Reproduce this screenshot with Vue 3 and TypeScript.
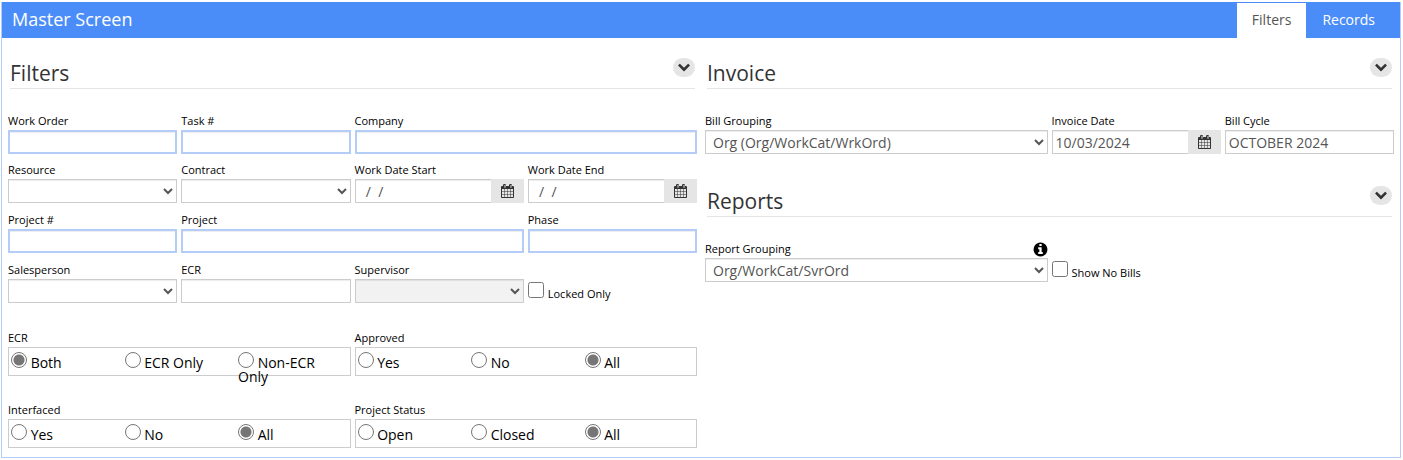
<script setup lang="ts">
import { ref } from 'vue'

interface Field {
  id: string
  label: string
  kind: 'lookup' | 'text' | 'select' | 'date'
  value?: string
  wide?: boolean
  disabled?: boolean
}

interface RadioGroup {
  id: string
  label: string
  options: string[]
  selected: string
}

const tabs = ['Filters', 'Records']
const activeTab = ref('Filters')
const emptyDate = '  /  /    '

const leadFields = ref<Field[]>([
  { id: 'work-order', label: 'Work Order', kind: 'lookup', value: '' },
  { id: 'task', label: 'Task #', kind: 'lookup', value: '' },
  { id: 'company', label: 'Company', kind: 'lookup', value: '', wide: true },
])

const detailFields = ref<Field[]>([
  { id: 'resource', label: 'Resource', kind: 'select', value: '' },
  { id: 'contract', label: 'Contract', kind: 'select', value: '' },
  { id: 'date-start', label: 'Work Date Start', kind: 'date', value: emptyDate },
  { id: 'date-end', label: 'Work Date End', kind: 'date', value: emptyDate },
  { id: 'project-no', label: 'Project #', kind: 'lookup', value: '' },
  { id: 'project', label: 'Project', kind: 'lookup', value: '', wide: true },
  { id: 'phase', label: 'Phase', kind: 'lookup', value: '' },
  { id: 'salesperson', label: 'Salesperson', kind: 'select', value: '' },
  { id: 'ecr', label: 'ECR', kind: 'text', value: '' },
  { id: 'supervisor', label: 'Supervisor', kind: 'select', value: '', disabled: true },
])

const invoiceFields = ref<Field[]>([
  { id: 'bill-grouping', label: 'Bill Grouping', kind: 'select', value: 'Org (Org/WorkCat/WrkOrd)', wide: true },
  { id: 'invoice-date', label: 'Invoice Date', kind: 'date', value: '10/03/2024' },
  { id: 'bill-cycle', label: 'Bill Cycle', kind: 'text', value: 'OCTOBER 2024' },
])

const groups = ref<RadioGroup[]>([
  { id: 'ecr-type', label: 'ECR', options: ['Both', 'ECR Only', 'Non-ECR Only'], selected: 'Both' },
  { id: 'approved', label: 'Approved', options: ['Yes', 'No', 'All'], selected: 'All' },
  { id: 'interfaced', label: 'Interfaced', options: ['Yes', 'No', 'All'], selected: 'All' },
  { id: 'status', label: 'Project Status', options: ['Open', 'Closed', 'All'], selected: 'All' },
])

const sets = { lead: leadFields, detail: detailFields, invoice: invoiceFields }
const lockedOnly = ref(false)
const showNoBills = ref(false)
const reportGrouping = ref('Org/WorkCat/SvrOrd')

const chevron =
  'M1683 808l-742 741q-19 19-45 19t-45-19l-742-741q-19-19-19-45.500t19-45.500l166-165q19-19 45-19t45 19l531 531 531-531q19-19 45-19t45 19l166 165q19 19 19 45.500t-19 45.500z'
const calendar =
  'M192 1664h288v-288h-288v288zM544 1664h320v-288h-320v288zM192 1312h288v-320h-288v320zM544 1312h320v-320h-320v320zM192 928h288v-288h-288v288zM928 1664h320v-288h-320v288zM544 928h320v-288h-320v288zM1312 1664h288v-288h-288v288zM928 1312h320v-320h-320v320zM640 448v-288q0-13-9.500-22.500t-22.500-9.500h-64q-13 0-22.500 9.500t-9.500 22.500v288q0 13 9.500 22.500t22.500 9.500h64q13 0 22.500-9.500t9.500-22.500zM1312 1312h288v-320h-288v320zM928 928h320v-288h-320v288zM1312 928h288v-288h-288v288zM1408 448v-288q0-13-9.500-22.500t-22.500-9.500h-64q-13 0-22.500 9.500t-9.500 22.500v288q0 13 9.500 22.500t22.500 9.500h64q13 0 22.500-9.500t9.500-22.500zM1728 384v1280q0 52-38 90t-90 38h-1408q-52 0-90-38t-38-90v-1280q0-52 38-90t90-38h128v-96q0-66 47-113t113-47h64q66 0 113 47t47 113v96h384v-96q0-66 47-113t113-47h64q66 0 113 47t47 113v96h128q52 0 90 38t38 90z'
const info =
  'M1152 1376v-160q0-14-9-23t-23-9h-96v-512q0-14-9-23t-23-9h-320q-14 0-23 9t-9 23v160q0 14 9 23t23 9h96v320h-96q-14 0-23 9t-9 23v160q0 14 9 23t23 9h448q14 0 23-9t9-23zm-128-896v-160q0-14-9-23t-23-9h-192q-14 0-23 9t-9 23v160q0 14 9 23t23 9h192q14 0 23-9t9-23zm640 416q0 209-103 385.500t-279.500 279.500-385.500 103-385.500-103-279.500-279.500-103-385.500 103-385.500 279.500-279.500 385.500-103 385.500 103 279.500 279.500 103 385.500z'

const columns = [
  [{ title: 'Filters', blocks: ['lead', 'detail', 'radios'] }],
  [
    { title: 'Invoice', blocks: ['invoice'] },
    { title: 'Reports', blocks: ['report'] },
  ],
]

function fieldsOf(block: string): Field[] {
  return block in sets ? sets[block as keyof typeof sets].value : []
}
</script>

<template>
  <main class="panel">
    <header class="bar">
      <h1 class="title">Master Screen</h1>
      <nav class="tabs">
        <button
          v-for="tab in tabs"
          :key="tab"
          type="button"
          class="tab"
          :class="{ active: tab === activeTab }"
          @click="activeTab = tab"
        >{{ tab }}</button>
      </nav>
    </header>

    <div class="columns">
      <div v-for="(column, c) in columns" :key="c">
        <section v-for="section in column" :key="section.title" class="section">
          <div class="section-head">
            <h2>{{ section.title }}</h2>
            <button type="button" class="toggle" :aria-label="'Toggle ' + section.title">
              <svg width="14" height="13" viewBox="0 138 1792 1792" aria-hidden="true"><path :d="chevron" /></svg>
            </button>
          </div>

          <div v-for="block in section.blocks" :key="block" class="grid" :class="block">
            <div v-for="field in fieldsOf(block)" :key="field.id" class="field" :class="{ wide: field.wide }">
              <label :for="field.id" class="caption">{{ field.label }}</label>
              <select v-if="field.kind === 'select'" :id="field.id" v-model="field.value" class="control" :disabled="field.disabled">
                <option :value="field.value">{{ field.value }}</option>
              </select>
              <div v-else-if="field.kind === 'date'" class="date">
                <input :id="field.id" v-model="field.value" type="text" class="control" />
                <button type="button" class="pick" :aria-label="'Pick ' + field.label">
                  <svg width="13" height="14" viewBox="64 0 1664 1792" aria-hidden="true"><path :d="calendar" /></svg>
                </button>
              </div>
              <input v-else :id="field.id" v-model="field.value" type="text" class="control" :class="{ lookup: field.kind === 'lookup' }" />
            </div>

            <label v-if="block === 'detail'" class="check">
              <input v-model="lockedOnly" type="checkbox" />
              <span>Locked Only</span>
            </label>

            <template v-if="block === 'radios'">
              <div v-for="group in groups" :key="group.id" class="wide" role="radiogroup" :aria-labelledby="group.id">
                <span :id="group.id" class="caption">{{ group.label }}</span>
                <div class="options">
                  <label v-for="option in group.options" :key="option" class="option">
                    <input v-model="group.selected" type="radio" :name="group.id" :value="option" />
                    {{ option }}
                  </label>
                </div>
              </div>
            </template>

            <template v-if="block === 'report'">
              <div class="field wide">
                <div class="caption-row">
                  <label for="report-grouping" class="caption">Report Grouping</label>
                  <svg class="info" width="15" height="15" viewBox="64 64 1664 1664" aria-hidden="true"><path :d="info" /></svg>
                </div>
                <select id="report-grouping" v-model="reportGrouping" class="control">
                  <option>Org/WorkCat/SvrOrd</option>
                </select>
              </div>
              <label class="check">
                <input v-model="showNoBills" type="checkbox" />
                <span>Show No Bills</span>
              </label>
            </template>
          </div>
        </section>
      </div>
    </div>
  </main>
</template>

<style>
body {
  margin: 0;
  background: #fff;
}
</style>

<style scoped>
.panel,
.panel * {
  box-sizing: border-box;
}
.panel {
  margin: 2px 2px 2px 1px;
  border: 1px solid #b3cdf8;
  border-top: 0;
  color: #000;
  font-family: 'Open Sans', 'Noto Sans', sans-serif;
  font-size: 14px;
}
.bar {
  display: flex;
  justify-content: space-between;
  height: 36px;
  padding: 1px 10px 0;
  background: #4b8df8;
  color: #fff;
}
.title {
  margin: 0;
  font-size: 18px;
  font-weight: 400;
  line-height: 32px;
}
.tabs {
  display: flex;
  gap: 1px;
}
.tab {
  padding: 0 15px 2px;
  border: 0;
  background: none;
  color: #fff;
  font: inherit;
  line-height: 32px;
}
.tab.active {
  background: #fff;
  color: #555;
}
.columns {
  display: grid;
  grid-template-columns: 1fr 1fr;
  gap: 8px;
  padding: 0 6px 9px;
}
.section-head {
  display: flex;
  justify-content: space-between;
  align-items: flex-start;
  height: 51px;
  margin: 0 2px 25px;
  padding-top: 20px;
  border-bottom: 1px solid #e5e5e5;
}
.section + .section .section-head {
  margin-top: 12px;
}
h2 {
  margin: 0;
  color: #333;
  font-size: 21px;
  font-weight: 400;
  line-height: 30px;
}
.toggle {
  display: flex;
  align-items: center;
  justify-content: center;
  width: 22px;
  height: 19px;
  padding: 0;
  border: 0;
  border-radius: 10px;
  background: #e5e5e5;
}
.toggle svg {
  fill: #333;
}
.grid {
  display: grid;
  grid-template-columns: repeat(4, minmax(0, 1fr));
  gap: 10px 4px;
}
.lead {
  margin-bottom: 9px;
}
.detail {
  margin-bottom: 28px;
}
.radios {
  row-gap: 27px;
}
.wide {
  grid-column: span 2;
}
.caption {
  display: block;
  padding-bottom: 2px;
  font-size: 11px;
  line-height: 14px;
}
.caption-row {
  display: flex;
  justify-content: space-between;
}
.info {
  display: block;
}
.control {
  display: block;
  width: 100%;
  height: 24px;
  margin: 0;
  padding: 0 3px;
  border: 1px solid #ccc;
  border-radius: 0;
  background-color: #fff;
  box-shadow: inset 0 1px 1px rgba(0, 0, 0, 0.075);
  color: #555;
  font: inherit;
}
.control.lookup {
  border: 2px solid #b3cdf8;
}
.control:disabled {
  background-color: #f2f2f2;
  opacity: 1;
}
.date {
  display: flex;
}
.date .control {
  flex: 1;
  min-width: 0;
  border-right: 0;
}
.pick {
  display: flex;
  align-items: center;
  justify-content: center;
  width: 33px;
  height: 24px;
  padding: 0;
  border: 0;
  background: #e5e5e5;
}
.pick svg {
  fill: #333;
}
.check {
  display: flex;
  align-items: flex-end;
  align-self: end;
  gap: 4px;
  height: 24px;
  padding-bottom: 2px;
  font-size: 11px;
  line-height: 14px;
}
.check input {
  width: 16px;
  height: 16px;
  margin: 0 0 3px;
}
.options {
  display: grid;
  grid-template-columns: repeat(3, minmax(0, 1fr));
  height: 29px;
  padding-top: 4px;
  border: 1px solid #ccc;
}
.option {
  padding: 0 10px 0 2px;
  line-height: 14px;
}
.option input {
  appearance: none;
  width: 16px;
  height: 16px;
  margin: 0;
  border: 1px solid #767676;
  border-radius: 50%;
  background: #fff;
  vertical-align: baseline;
}
.option input:checked {
  background: radial-gradient(circle, #767676 5px, #fff 6px);
}
</style>
